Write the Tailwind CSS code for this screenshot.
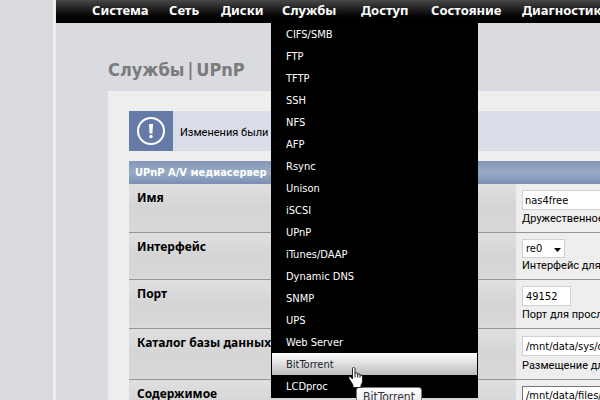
<!DOCTYPE html>
<html lang="ru">
<head>
<meta charset="utf-8">
<title>Службы | UPnP</title>
<script src="https://cdn.jsdelivr.net/npm/@tailwindcss/browser@4"></script>
</head>
<body class="h-screen overflow-hidden bg-[#d9dbe0] pl-[53px] font-['DejaVu_Sans_Condensed','DejaVu_Sans',sans-serif] text-[11px] leading-[14px] text-black">
<div class="min-h-full border-l-3 border-[#eeeeeb]">
  <nav class="relative z-10 h-[23px] bg-linear-to-b from-[#484848] to-black">
    <ul class="flex pl-[25px] font-['Noto_Sans',sans-serif] text-[13px] leading-[20px] font-bold whitespace-nowrap text-white">
      <li class="w-[77px] shrink-0 pl-[11px]"><a href="#">Система</a></li>
      <li class="w-[52px] shrink-0 pl-[11px]"><a href="#">Сеть</a></li>
      <li class="w-[61px] shrink-0 pl-[11px]"><a href="#">Диски</a></li>
      <li class="relative w-[79px] shrink-0 pl-[11px]"><a href="#">Службы</a>
        <ul class="absolute top-[23px] left-0 w-[207px] border-x border-b border-black bg-black font-['DejaVu_Sans_Condensed','DejaVu_Sans',sans-serif] text-[11px] leading-[20px] font-normal">
          <li><a class="block px-[14px] pt-[2px]" href="#">CIFS/SMB</a></li>
          <li><a class="block px-[14px] pt-[2px]" href="#">FTP</a></li>
          <li><a class="block px-[14px] pt-[2px]" href="#">TFTP</a></li>
          <li><a class="block px-[14px] pt-[2px]" href="#">SSH</a></li>
          <li><a class="block px-[14px] pt-[2px]" href="#">NFS</a></li>
          <li><a class="block px-[14px] pt-[2px]" href="#">AFP</a></li>
          <li><a class="block px-[14px] pt-[2px]" href="#">Rsync</a></li>
          <li><a class="block px-[14px] pt-[2px]" href="#">Unison</a></li>
          <li><a class="block px-[14px] pt-[2px]" href="#">iSCSI</a></li>
          <li><a class="block px-[14px] pt-[2px]" href="#">UPnP</a></li>
          <li><a class="block px-[14px] pt-[2px]" href="#">iTunes/DAAP</a></li>
          <li><a class="block px-[14px] pt-[2px]" href="#">Dynamic DNS</a></li>
          <li><a class="block px-[14px] pt-[2px]" href="#">SNMP</a></li>
          <li><a class="block px-[14px] pt-[2px]" href="#">UPS</a></li>
          <li><a class="block px-[14px] pt-[2px]" href="#">Web Server</a></li>
          <li class="relative"><a class="block bg-linear-to-b from-white to-[#bdbdbd] px-[14px] pt-[2px] text-[#1c1c2c]" href="#">BitTorrent</a>
            <svg class="absolute top-[14px] left-[76px] z-20" width="17" height="21" viewBox="0 0 17 21" aria-hidden="true"><path d="M4.500 1.500Q4.500 .5 5.500 .5T7 1.500V6Q9 5 9.700 7Q11.500 6 12 8Q14.500 7.500 14.500 10V14Q14.500 16 13 18V20.500H5V18L1.500 12.500Q0 10 1.500 9.500Q3 9.500 4.500 12Z" fill="#fff" stroke="#111" stroke-width=".9" stroke-linejoin="round"/><path d="M7 6V10.500M9.700 7V10.500M12 8V10.500" stroke="#111" fill="none"/></svg>
            <span class="absolute top-[34px] left-[84px] z-10 rounded-[3px] border border-[#767676] bg-linear-to-b from-white to-[#e4e5f0] px-[6px] text-[12px] leading-[18px] text-[#333]" role="tooltip">BitTorrent</span>
          </li>
          <li><a class="block px-[14px] pt-[2px]" href="#">LCDproc</a></li>
        </ul>
      </li>
      <li class="w-[70px] shrink-0 pl-[11px]"><a href="#">Доступ</a></li>
      <li class="w-[91px] shrink-0 pl-[11px]"><a href="#">Состояние</a></li>
      <li class="shrink-0 pl-[11px]"><a href="#">Диагностика</a></li>
    </ul>
  </nav>
  <h1 class="pt-[35px] pl-[52px] text-[18px] leading-[24px] font-bold text-[#7b7b7b]">Службы<span class="mx-[3px]">|</span>UPnP</h1>
  <main class="mt-[9px] ml-[52px] bg-[#eeeeee] pt-[20px] pl-[21px]">
    <div class="flex h-[40px] items-center bg-[#d9dde8] whitespace-nowrap">
      <div class="flex h-full w-[44px] shrink-0 items-center justify-center bg-[#667aa8]">
        <svg width="30" height="30" viewBox="0 0 30 30" aria-hidden="true"><circle cx="15" cy="15" r="13" fill="none" stroke="#fff" stroke-width="2"/><path d="M13 8H17L16.400 17.500H13.600Z" fill="#fff"/><circle cx="15" cy="20.500" r="1.700" fill="#fff"/></svg>
      </div>
      <p class="pt-[3px] pl-[7px] font-[Roboto,sans-serif]">Изменения были применены</p>
    </div>
    <table class="mt-[10px] w-full table-fixed border-collapse text-left whitespace-nowrap">
      <colgroup><col class="w-[387px]"><col></colgroup>
      <thead><tr class="h-[23px] bg-linear-to-b from-[#8496b6] via-[#99abc5] to-[#7890b4]"><th colspan="2" class="pt-px pl-[6px] text-white">UPnP A/V медиасервер</th></tr></thead>
      <tbody class="align-top">
        <tr class="h-[48px] border-b border-[#969696]">
          <th class="bg-linear-to-b from-[#dfdfdf] via-[#d5d5d5] to-[#d8d8d8] pt-[7px] pl-[8px] font-['Noto_Sans',sans-serif] text-[12px]"><label for="name">Имя</label></th>
          <td class="overflow-hidden pt-[6px] pl-[6px]"><input id="name" class="block h-[20px] w-[240px] border border-[#d0d0d0] bg-white px-[2px] pt-px" value="nas4free"><p class="pt-[2px] font-[Roboto,sans-serif]">Дружественное имя</p></td>
        </tr>
        <tr class="h-[47px] border-b border-[#969696]">
          <th class="bg-linear-to-b from-[#dfdfdf] via-[#d5d5d5] to-[#d8d8d8] pt-[7px] pl-[8px] font-['Noto_Sans',sans-serif] text-[12px]"><label for="iface">Интерфейс</label></th>
          <td class="overflow-hidden pt-[6px] pl-[6px]"><div class="relative w-[43px]"><select id="iface" class="block h-[19px] w-full appearance-none border border-[#d0d0d0] bg-white px-[3px] pt-px"><option>re0</option></select><svg class="pointer-events-none absolute top-[9px] right-[4px]" width="7" height="4" viewBox="0 0 7 4" aria-hidden="true"><path d="M0 0H7L3.500 4Z"/></svg></div><p class="pt-px font-[Roboto,sans-serif]">Интерфейс для прослушивания</p></td>
        </tr>
        <tr class="h-[49px] border-b border-[#969696]">
          <th class="bg-linear-to-b from-[#dfdfdf] via-[#d5d5d5] to-[#d8d8d8] pt-[7px] pl-[8px] font-['Noto_Sans',sans-serif] text-[12px]"><label for="port">Порт</label></th>
          <td class="overflow-hidden pt-[6px] pl-[6px]"><input id="port" class="block h-[20px] w-[49px] border border-[#d0d0d0] bg-white px-[3px] pt-px" value="49152"><p class="pt-[2px] font-[Roboto,sans-serif]">Порт для прослушивания</p></td>
        </tr>
        <tr class="h-[51px] border-b border-[#969696]">
          <th class="bg-linear-to-b from-[#dfdfdf] via-[#d5d5d5] to-[#d8d8d8] pt-[7px] pl-[8px] font-['Noto_Sans',sans-serif] text-[12px]"><label for="db">Каталог базы данных</label></th>
          <td class="overflow-hidden pt-[7px] pl-[6px]"><input id="db" class="block h-[20px] w-[240px] border border-[#d0d0d0] bg-white px-[3px] pt-px" value="/mnt/data/sys/db"><p class="pt-[3px] font-[Roboto,sans-serif]">Размещение для базы данных</p></td>
        </tr>
        <tr class="h-[51px]">
          <th class="bg-linear-to-b from-[#dfdfdf] via-[#d5d5d5] to-[#d8d8d8] pt-[7px] pl-[8px] font-['Noto_Sans',sans-serif] text-[12px]"><label for="content">Содержимое</label></th>
          <td class="overflow-hidden pt-[6px] pl-[6px]"><input id="content" class="block h-[40px] w-[240px] border border-[#777] bg-white px-[3px] pb-[20px]" value="/mnt/data/files/"></td>
        </tr>
      </tbody>
    </table>
  </main>
</div>
</body>
</html>
